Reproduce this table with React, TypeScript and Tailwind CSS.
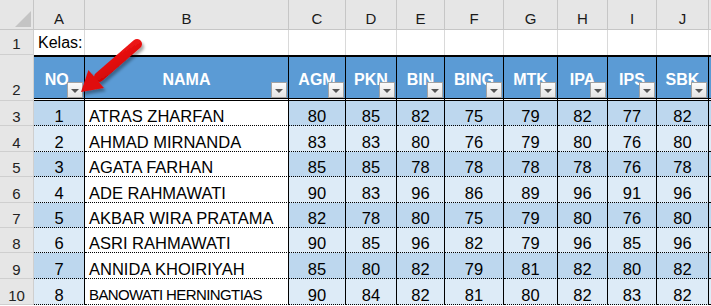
import React from "react";

const GRID =
  "grid grid-cols-[34px_51px_204px_57px_51px_48px_59px_54px_50px_49px_52px_1fr]";

const letters = ["A", "B", "C", "D", "E", "F", "G", "H", "I", "J", ""];
const headers = ["NO.", "NAMA", "AGM", "PKN", "BIN", "BING", "MTK", "IPA", "IPS", "SBK", ""];

const data: [string, number[]][] = [
  ["ATRAS ZHARFAN", [80, 85, 82, 75, 79, 82, 77, 82]],
  ["AHMAD MIRNANDA", [83, 83, 80, 76, 79, 80, 76, 80]],
  ["AGATA FARHAN", [85, 85, 78, 78, 78, 78, 76, 78]],
  ["ADE RAHMAWATI", [90, 83, 96, 86, 89, 96, 91, 96]],
  ["AKBAR WIRA PRATAMA", [82, 78, 80, 75, 79, 80, 76, 80]],
  ["ASRI RAHMAWATI", [90, 85, 96, 82, 79, 96, 85, 96]],
  ["ANNIDA KHOIRIYAH", [85, 80, 82, 79, 81, 82, 80, 82]],
  ["BANOWATI HERNINGTIAS", [90, 84, 82, 81, 80, 82, 83, 82]],
];

const heights = ["h-[25px]", "h-[26px]", "h-[25px]", "h-[26px]", "h-[25px]", "h-[25px]", "h-[26px]", "h-[26px]"];

function RowHead({ n, pb }: { n: number; pb: string }) {
  return (
    <div
      className={`flex items-end justify-center bg-[#e6e6e6] border-r border-b border-[#cfcfcf] text-[15px] leading-[17px] text-[#222] ${pb}`}
    >
      {n}
    </div>
  );
}

function DropBtn() {
  return (
    <div className="absolute right-[1px] bottom-0 w-[16px] h-[16px] border border-[#a3a3a3] bg-linear-to-b from-[#fbfbfb] to-[#e4e4e4] flex items-center justify-center">
      <div className="mt-[2px] w-0 h-0 border-l-[4px] border-r-[4px] border-t-[4px] border-l-transparent border-r-transparent border-t-[#555]" />
    </div>
  );
}

export default function App() {
  return (
    <div className="relative w-[711px] h-[306px] overflow-hidden bg-white text-black font-['Liberation_Sans',Arial,sans-serif]">
      {/* column letters */}
      <div className={`${GRID} h-[30px] bg-[#e6e6e6]`}>
        <div className="relative border-r border-b border-[#c6c6c6]">
          <svg width="33" height="29" className="absolute left-0 top-0">
            <polygon points="15,27 31,11 31,27" fill="#c4c4c4" />
          </svg>
        </div>
        {letters.map((l, i) => (
          <div
            key={i}
            className={`flex items-end justify-center pb-[2px] text-[15px] leading-[17px] text-[#1a1a1a] border-b border-[#c6c6c6] ${
              i < 10 ? "border-r" : ""
            }`}
          >
            {l}
          </div>
        ))}
      </div>

      {/* row 1 */}
      <div className={`${GRID} h-[25px]`}>
        <RowHead n={1} pb="pb-[2px]" />
        {letters.map((_, i) => (
          <div
            key={i}
            className={`flex items-end pb-[3px] text-[16px] leading-[18px] ${
              i < 10 ? "border-r border-[#d9d9d9]" : ""
            } ${i === 0 ? "pl-[4px]" : ""}`}
          >
            {i === 0 ? "Kelas:" : ""}
          </div>
        ))}
      </div>

      {/* row 2 header */}
      <div className={`${GRID} h-[46px]`}>
        <RowHead n={2} pb="pb-[2px]" />
        {headers.map((h, i) => (
          <div
            key={i}
            className={`relative flex items-end justify-center pb-[9px] bg-[#5b9bd5] bg-clip-padding border-t-2 border-b-[3px] border-black [border-bottom-style:double] text-white font-bold text-[16px] leading-[18px] ${
              i < 10 ? "border-r" : ""
            }`}
          >
            {h}
            {i < 10 && <DropBtn />}
          </div>
        ))}
      </div>

      {/* data rows */}
      {data.map(([name, scores], r) => {
        const band = r % 2 === 0 ? "bg-[#bdd7ee]" : "bg-[#ddebf7]";
        return (
          <div key={r} className={`${GRID} ${heights[r]}`}>
            <RowHead n={r + 3} pb="pb-0" />
            <div
              className={`flex items-end justify-center ${band} border-r border-b border-black [border-bottom-style:dotted] text-[16.5px] leading-[18px]`}
            >
              {r + 1}
            </div>
            <div
              className={`flex items-end pl-[4px] bg-white border-r border-b border-black [border-bottom-style:dotted] ${
                name.length > 18
                  ? "text-[15px] tracking-[-0.6px] leading-[17px] pb-[1px]"
                  : "text-[16.5px] leading-[18px]"
              } whitespace-nowrap overflow-hidden`}
            >
              {name}
            </div>
            {scores.map((s, c) => (
              <div
                key={c}
                className={`flex items-end justify-center ${band} border-r border-b border-black [border-bottom-style:dotted] text-[16.5px] leading-[18px]`}
              >
                {s}
              </div>
            ))}
            <div className={`${band} border-b border-black [border-bottom-style:dotted]`} />
          </div>
        );
      })}

      {/* red arrow */}
      <svg width="711" height="306" className="absolute left-0 top-0 pointer-events-none">
        <defs>
          <linearGradient id="redg" x1="0" y1="0" x2="0.6" y2="1">
            <stop offset="0" stopColor="#ff2020" />
            <stop offset="1" stopColor="#cc0000" />
          </linearGradient>
          <filter id="ash" x="-30%" y="-30%" width="160%" height="160%">
            <feDropShadow dx="2" dy="3" stdDeviation="1.5" floodColor="#000" floodOpacity="0.35" />
          </filter>
        </defs>
        <g filter="url(#ash)">
          <line x1="137" y1="44" x2="99" y2="77" stroke="url(#redg)" strokeWidth="10" strokeLinecap="round" />
          <polygon points="81,92 88.4,69.9 104,88.1" fill="#e01010" />
        </g>
      </svg>
    </div>
  );
}
